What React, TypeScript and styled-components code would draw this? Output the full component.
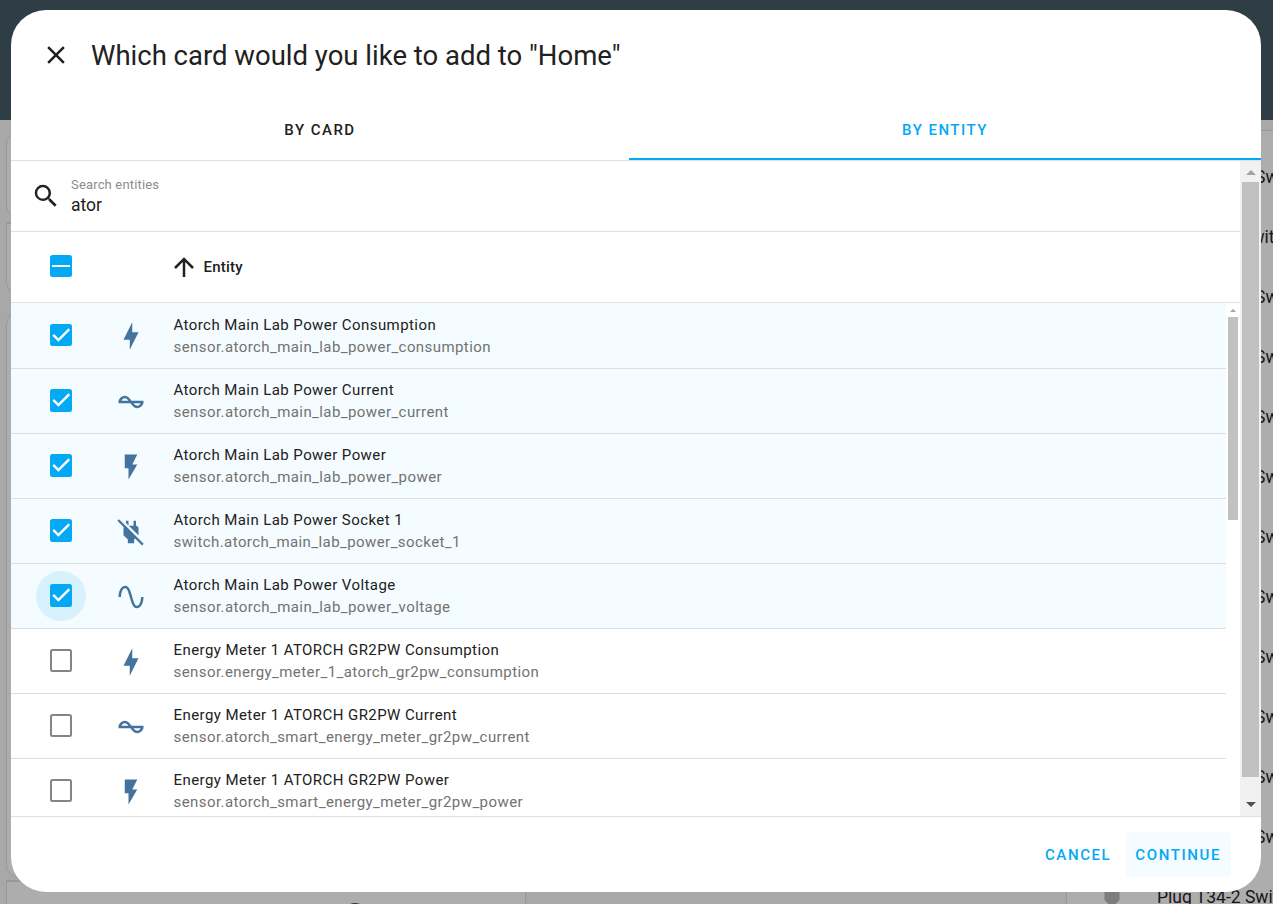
import React from "react";
import styled, { createGlobalStyle } from "styled-components";

const GlobalStyle = createGlobalStyle`
  *, *::before, *::after { box-sizing: border-box; }
  html, body { margin: 0; height: 100%; }
  body { font-family: Roboto, "Liberation Sans", sans-serif; color: #212121; overflow: hidden; }
  #root { height: 100%; }
`;

const Page = styled.div`
  position: relative;
  height: 904px;
  overflow: hidden;
  background: #a8a8a8;
`;
const AppHeader = styled.div`
  height: 120px;
  background: #2f3d44;
`;
const Board = styled.div`
  display: flex;
  justify-content: space-between;
  height: 784px;
  padding: 10px 0 0 6px;
`;
const Column = styled.div<{ $width: number }>`
  flex: none;
  width: ${(p) => p.$width}px;
`;
const BackCard = styled.div<{ $height: number; $gap?: number; $top?: "square" }>`
  height: ${(p) => p.$height}px;
  margin-bottom: ${(p) => p.$gap ?? 0}px;
  border: 1px solid #989898;
  border-top-width: ${(p) => (p.$top ? 2 : 1)}px;
  border-radius: ${(p) => (p.$top ? "0 0 15px 15px" : "15px")};
  background: #adadad;
`;
const Knob = styled.div`
  width: 24px;
  height: 24px;
  margin: 21px 0 0 336px;
  border-radius: 50%;
  background: #26383f;
`;
const SwitchCard = styled.div`
  height: 800px;
  padding-top: 16px;
  border: 1px solid #989898;
  border-right: 0;
  background: #adadad;
`;
const SwitchRow = styled.div<{ $indent: number }>`
  display: flex;
  align-items: center;
  height: 60px;
  padding-left: ${(p) => p.$indent}px;
  font-size: 17.5px;
  line-height: 60px;
  white-space: nowrap;
  overflow: hidden;
  color: #161616;
`;
const SwitchIcon = styled.svg`
  flex: none;
  width: 30px;
  height: 30px;
  margin: 0 30px 0 30px;
  fill: #7d7d7d;
`;

const Overlay = styled.div`
  position: absolute;
  inset: 0;
  padding: 10px 12px 12px 11px;
`;
const Dialog = styled.div`
  display: flex;
  flex-direction: column;
  width: 1250px;
  height: 882px;
  border-radius: 35px;
  overflow: hidden;
  background: #fff;
`;
const TitleBar = styled.header`
  display: flex;
  align-items: center;
  flex: none;
  height: 90px;
  padding-left: 30px;
`;
const Title = styled.h2`
  margin: 2px 0 0 20px;
  font-size: 27.5px;
  font-weight: 400;
  line-height: 40px;
`;
const Icon = styled.svg<{ $color?: string }>`
  flex: none;
  display: block;
  width: 30px;
  height: 30px;
  fill: ${(p) => p.$color ?? "#212121"};
`;
const Tabs = styled.nav`
  display: flex;
  flex: none;
  height: 61px;
  border-bottom: 1px solid #e0e0e0;
`;
const Tab = styled.div<{ $width: number; $active?: boolean }>`
  width: ${(p) => p.$width}px;
  height: 60px;
  border-bottom: 2px solid ${(p) => (p.$active ? "#03a9f4" : "transparent")};
  color: ${(p) => (p.$active ? "#03a9f4" : "#212121")};
  font-size: 15px;
  font-weight: 500;
  letter-spacing: 1.48px;
  line-height: 60px;
  text-align: center;
`;
const Body = styled.div`
  display: flex;
  flex: none;
  height: 655px;
`;
const Table = styled.div`
  width: 1229px;
  display: flex;
  flex-direction: column;
`;
const SearchBar = styled.div`
  display: flex;
  align-items: center;
  flex: none;
  height: 71px;
  padding-left: 20px;
  border-bottom: 1px solid #e0e0e0;
`;
const SearchField = styled.div`
  display: flex;
  flex-direction: column;
  margin-left: 10px;
`;
const SearchLabel = styled.span`
  font-size: 13px;
  letter-spacing: 0.17px;
  line-height: 18px;
  color: #8c8c8c;
`;
const SearchValue = styled.span`
  font-size: 17.5px;
  line-height: 22px;
`;
const HeadRow = styled.div`
  display: flex;
  align-items: center;
  flex: none;
  height: 71px;
  padding-left: 39px;
  border-bottom: 1px solid #e0e0e0;
`;
const HeadLabel = styled.div`
  display: flex;
  align-items: center;
  gap: 4.5px;
  margin-left: 97px;
  font-size: 15px;
  font-weight: 500;
  letter-spacing: 0.2px;

  svg {
    margin-top: -1px;
  }
`;
const ListArea = styled.div`
  display: flex;
  height: 513px;
`;
const List = styled.div`
  width: 1215px;
  overflow: hidden;
`;
const CheckHolder = styled.div<{ $focus?: boolean }>`
  display: flex;
  align-items: center;
  justify-content: center;
  flex: none;
  width: 50px;
  height: 50px;
  margin: 0 -14px;
  border-radius: 50%;
  background: ${(p) => (p.$focus ? "#d7f1fd" : "transparent")};
`;
const Box = styled.span<{ $on?: boolean; $height: number }>`
  display: flex;
  align-items: flex-start;
  width: 22px;
  height: ${(p) => p.$height}px;
  margin-top: ${(p) => (p.$height === 23 ? -1 : 0)}px;
  border: 2px solid ${(p) => (p.$on ? "#03a9f4" : "#858585")};
  border-radius: 2.5px;
  background: ${(p) => (p.$on ? "#03a9f4" : "#fff")};
`;
const Mark = styled.svg`
  display: block;
  flex: none;
  width: 18px;
  height: 18px;
  fill: none;
  stroke: #fff;
`;
const IconCell = styled.div`
  margin: 2px 27.5px 0 44px;
`;
const Names = styled.div`
  display: flex;
  flex-direction: column;
  font-size: 15px;
  letter-spacing: 0.425px;
  line-height: 22px;
`;
const Row = styled.div<{ $selected?: boolean; $first?: boolean }>`
  display: flex;
  align-items: center;
  height: ${(p) => (p.$first ? 66 : 65)}px;
  padding: 0 0 ${(p) => (p.$first ? 1 : 0)}px 39px;
  border-bottom: 1px solid #dcdfe0;
  background: ${(p) => (p.$selected ? "#f4fcff" : "#fff")};

  ${Names} {
    margin-top: ${(p) => (p.$first ? 2 : 0)}px;
  }
`;
const EntityId = styled.span`
  color: #727272;
`;
const Scroll = styled.div<{ $inner?: boolean }>`
  display: flex;
  flex-direction: column;
  align-items: center;
  flex: none;
  width: ${(p) => (p.$inner ? 14 : 21)}px;
  height: 100%;
  padding-top: ${(p) => (p.$inner ? 6 : 9)}px;
  background: ${(p) => (p.$inner ? "#fff" : "#f1f1f1")};
`;
const Thumb = styled.div<{ $width: number; $height: number; $top: number }>`
  width: ${(p) => p.$width}px;
  height: ${(p) => p.$height}px;
  margin-top: ${(p) => p.$top}px;
  background: #c1c1c1;
`;
const Arrow = styled.span<{ $half: number; $down?: boolean; $color: string; $top?: number }>`
  width: 0;
  height: 0;
  margin-top: ${(p) => p.$top ?? 0}px;
  border: ${(p) => p.$half}px solid transparent;
  border-${(p) => (p.$down ? "bottom" : "top")}-width: 0;
  border-${(p) => (p.$down ? "top" : "bottom")}-color: ${(p) => p.$color};
`;
const Footer = styled.footer`
  display: flex;
  align-items: flex-start;
  justify-content: flex-end;
  flex: 1;
  padding: 15px 30px 0 0;
  border-top: 1px solid #e0e0e0;
`;
const Button = styled.button<{ $focus?: boolean }>`
  height: 45px;
  margin: 0 0 0 5px;
  padding: 1px 10px 0 9px;
  border: 0;
  border-radius: 5px;
  background: ${(p) => (p.$focus ? "#f4fcff" : "transparent")};
  color: #03a9f4;
  font: 500 15px/44px Roboto, "Liberation Sans", sans-serif;
  letter-spacing: 1.6px;
`;

const paths = {
  close: "M19,6.41L17.59,5L12,10.59L6.41,5L5,6.41L10.59,12L5,17.59L6.41,19L12,13.41L17.59,19L19,17.59L13.41,12L19,6.41Z",
  magnify: "M9.5,3A6.5,6.5 0 0,1 16,9.5C16,11.11 15.41,12.59 14.44,13.73L14.71,14H15.5L20.5,19L19,20.5L14,15.5V14.71L13.73,14.44C12.59,15.41 11.11,16 9.5,16A6.5,6.5 0 0,1 3,9.5A6.5,6.5 0 0,1 9.5,3M9.5,5C7,5 5,7 5,9.5C5,12 7,14 9.5,14C12,14 14,12 14,9.5C14,7 12,5 9.5,5Z",
  arrowUp: "M13,20H11V8L5.5,13.5L4.08,12.08L12,4.16L19.92,12.08L18.5,13.5L13,8V20Z",
  bolt: "M11 15H6L13 1V9H18L11 23V15Z",
  flash: "M7,2V13H10V22L17,10H13L17,2H7Z",
  sine: "M16.5,21C13.5,21 12.31,16.76 11.05,12.28C10.14,9.04 9,5 7.5,5C4.11,5 4,11.93 4,12H2C2,11.63 2.06,3 7.5,3C10.5,3 11.71,7.25 12.97,11.74C13.83,14.8 15,19 16.5,19C19.94,19 20.03,12.07 20.03,12H22.03C22.03,12.37 21.97,21 16.5,21Z",
  current: "M12.43 11C12.28 10.84 10 7 7 7S2.32 10.18 2 11V13H11.57C11.72 13.16 14 17 17 17S21.68 13.82 22 13V11H12.43M7 9C8.17 9 9.18 9.85 10 11H4.31C4.78 10.17 5.54 9 7 9M17 15C15.83 15 14.82 14.15 14 13H19.69C19.22 13.83 18.46 15 17 15Z",
  plugOff: "M20.84 22.73L15.31 17.2L14.5 18V21H9.5V18L6 14.5V9C6 8.7 6.1 8.41 6.25 8.14L1.11 3L2.39 1.73L22.11 21.46L20.84 22.73M18 14.5V9C18 8 17 7 16 7V3H14V7H10.2L17.85 14.65L18 14.5M10 3H8V4.8L10 6.8V3Z",
  plug: "M16,7V3H14V7H10V3H8V7C7,7 6,8 6,9V14.5L9.5,18V21H14.5V18L18,14.5V9C18,8 17,7 16,7Z",
};
type IconName = keyof typeof paths;

const MdiIcon = ({ name, color }: { name: IconName; color?: string }) => (
  <Icon viewBox="0 0 24 24" $color={color}>
    <path d={paths[name]} />
  </Icon>
);

interface CheckboxProps {
  state: "on" | "off" | "mixed";
  focus?: boolean;
  height?: number;
}

const Checkbox = ({ state, focus, height = 23 }: CheckboxProps) => (
  <CheckHolder $focus={focus}>
    <Box $on={state !== "off"} $height={height}>
      {state === "on" && (
        <Mark viewBox="0 0 18 18">
          <path d="M1.2 8.9L6.4 14.1L17.3 3.2" strokeWidth="2.4" />
        </Mark>
      )}
      {state === "mixed" && (
        <Mark viewBox="0 0 18 18">
          <path d="M0 9H18" strokeWidth="2" />
        </Mark>
      )}
    </Box>
  </CheckHolder>
);

const HeadCheck = styled.div`
  margin-top: -2px;
`;

interface Entity {
  name: string;
  id: string;
  icon: IconName;
  selected?: boolean;
  focus?: boolean;
}

const entities: Entity[] = [
  { name: "Atorch Main Lab Power Consumption", id: "sensor.atorch_main_lab_power_consumption", icon: "bolt", selected: true },
  { name: "Atorch Main Lab Power Current", id: "sensor.atorch_main_lab_power_current", icon: "current", selected: true },
  { name: "Atorch Main Lab Power Power", id: "sensor.atorch_main_lab_power_power", icon: "flash", selected: true },
  { name: "Atorch Main Lab Power Socket 1", id: "switch.atorch_main_lab_power_socket_1", icon: "plugOff", selected: true },
  { name: "Atorch Main Lab Power Voltage", id: "sensor.atorch_main_lab_power_voltage", icon: "sine", selected: true, focus: true },
  { name: "Energy Meter 1 ATORCH GR2PW Consumption", id: "sensor.energy_meter_1_atorch_gr2pw_consumption", icon: "bolt" },
  { name: "Energy Meter 1 ATORCH GR2PW Current", id: "sensor.atorch_smart_energy_meter_gr2pw_current", icon: "current" },
  { name: "Energy Meter 1 ATORCH GR2PW Power", id: "sensor.atorch_smart_energy_meter_gr2pw_power", icon: "flash" },
];

const switchIndents = [188, 174, 188, 188, 188, 188, 188, 188, 188, 188, 188, 188];

export default function App() {
  return (
    <Page>
      <GlobalStyle />
      <AppHeader />
      <Board>
        <Column $width={520}>
          <BackCard $height={90} $gap={2} />
          <BackCard $height={74} $gap={14} $top="square" />
          <BackCard $height={569} $gap={1} />
          <BackCard $height={60} $top="square">
            <Knob />
          </BackCard>
        </Column>
        <Column $width={207}>
          <SwitchCard>
            {switchIndents.map((indent, i) => (
              <SwitchRow key={i} $indent={indent}>Switch</SwitchRow>
            ))}
            <SwitchRow $indent={0}>
              <SwitchIcon viewBox="0 0 24 24"><path d={paths.plug} /></SwitchIcon>
              Plug T34-2 Switch
            </SwitchRow>
          </SwitchCard>
        </Column>
      </Board>
      <Overlay>
        <Dialog>
          <TitleBar>
            <MdiIcon name="close" />
            <Title>Which card would you like to add to "Home"</Title>
          </TitleBar>
          <Tabs>
            <Tab $width={618}>BY CARD</Tab>
            <Tab $width={632} $active>BY ENTITY</Tab>
          </Tabs>
          <Body>
            <Table>
              <SearchBar>
                <MdiIcon name="magnify" />
                <SearchField>
                  <SearchLabel>Search entities</SearchLabel>
                  <SearchValue>ator</SearchValue>
                </SearchField>
              </SearchBar>
              <HeadRow>
                <HeadCheck>
                  <Checkbox state="mixed" height={22} />
                </HeadCheck>
                <HeadLabel>
                  <MdiIcon name="arrowUp" />
                  Entity
                </HeadLabel>
              </HeadRow>
              <ListArea>
                <List>
                  {entities.map((e, i) => (
                    <Row key={e.id} $selected={e.selected} $first={i === 0}>
                      <Checkbox state={e.selected ? "on" : "off"} focus={e.focus} height={i === 0 ? 22 : 23} />
                      <IconCell>
                        <MdiIcon name={e.icon} color="#44739e" />
                      </IconCell>
                      <Names>
                        <span>{e.name}</span>
                        <EntityId>{e.id}</EntityId>
                      </Names>
                    </Row>
                  ))}
                </List>
                <Scroll $inner>
                  <Arrow $half={3} $color="#a3a3a3" />
                  <Thumb $width={10} $height={203} $top={5} />
                </Scroll>
              </ListArea>
            </Table>
            <Scroll>
              <Arrow $half={5} $color="#a3a3a3" />
              <Thumb $width={17} $height={595} $top={7} />
              <Arrow $half={5} $down $color="#505050" $top={25} />
            </Scroll>
          </Body>
          <Footer>
            <Button>CANCEL</Button>
            <Button $focus>CONTINUE</Button>
          </Footer>
        </Dialog>
      </Overlay>
    </Page>
  );
}
